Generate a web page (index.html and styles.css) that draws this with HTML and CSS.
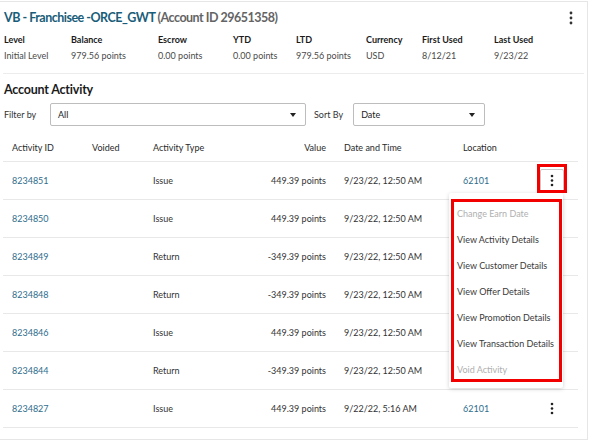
FILE: index.html
```html
<!DOCTYPE html>
<html>
<head>
<meta charset="utf-8">
<link rel="stylesheet" href="styles.css">
</head>
<body>
<div class="card">
  <div class="header">
    <h1 class="title"><span class="name">VB - Franchisee -ORCE_GWT</span> <span class="acct">(Account ID 29651358)</span></h1>
    <span class="kebab top"><svg width="4" height="14" viewBox="0 0 4 14"><circle cx="2" cy="2" r="1.4"/><circle cx="2" cy="7" r="1.4"/><circle cx="2" cy="12" r="1.4"/></svg></span>
  </div>
  <div class="summary">
    <div class="lbl">Level</div><div class="lbl">Balance</div><div class="lbl">Escrow</div><div class="lbl">YTD</div><div class="lbl">LTD</div><div class="lbl">Currency</div><div class="lbl">First Used</div><div class="lbl">Last Used</div>
    <div class="val">Initial Level</div><div class="val">979.56 points</div><div class="val">0.00 points</div><div class="val">0.00 points</div><div class="val">979.56 points</div><div class="val">USD</div><div class="val">8/12/21</div><div class="val">9/23/22</div>
  </div>
  <div class="divider"></div>
  <h2 class="section">Account Activity</h2>
  <div class="filters">
    <span class="flabel">Filter by</span>
    <div class="select wide"><span>All</span><span class="caret"></span></div>
    <span class="flabel sort">Sort By</span>
    <div class="select narrow"><span>Date</span><span class="caret"></span></div>
  </div>
  <div class="table">
    <div class="row head">
      <div class="c id">Activity ID</div><div class="c">Voided</div><div class="c">Activity Type</div><div class="c num">Value</div><div class="c">Date and Time</div><div class="c">Location</div><div class="c act"></div>
    </div>
    <div class="row">
      <div class="c id link">8234851</div><div class="c"></div><div class="c">Issue</div><div class="c num">449.39 points</div><div class="c">9/23/22, 12:50 AM</div><div class="c link">62101</div><div class="c act"><span class="kbtn boxed"><svg width="4" height="13" viewBox="0 0 4 13"><circle cx="2" cy="2" r="1.3"/><circle cx="2" cy="6.5" r="1.3"/><circle cx="2" cy="11" r="1.3"/></svg></span></div>
    </div>
    <div class="row">
      <div class="c id link">8234850</div><div class="c"></div><div class="c">Issue</div><div class="c num">449.39 points</div><div class="c">9/23/22, 12:50 AM</div><div class="c link">62101</div><div class="c act"></div>
    </div>
    <div class="row">
      <div class="c id link">8234849</div><div class="c"></div><div class="c">Return</div><div class="c num">-349.39 points</div><div class="c">9/23/22, 12:50 AM</div><div class="c link">62101</div><div class="c act"></div>
    </div>
    <div class="row">
      <div class="c id link">8234848</div><div class="c"></div><div class="c">Return</div><div class="c num">-349.39 points</div><div class="c">9/23/22, 12:50 AM</div><div class="c link">62101</div><div class="c act"></div>
    </div>
    <div class="row">
      <div class="c id link">8234846</div><div class="c"></div><div class="c">Issue</div><div class="c num">449.39 points</div><div class="c">9/23/22, 12:50 AM</div><div class="c link">62101</div><div class="c act"></div>
    </div>
    <div class="row">
      <div class="c id link">8234844</div><div class="c"></div><div class="c">Return</div><div class="c num">-349.39 points</div><div class="c">9/23/22, 12:50 AM</div><div class="c link">62101</div><div class="c act"></div>
    </div>
    <div class="row">
      <div class="c id link">8234827</div><div class="c"></div><div class="c">Issue</div><div class="c num">449.39 points</div><div class="c">9/22/22, 5:16 AM</div><div class="c link">62101</div><div class="c act"><span class="kbtn"><svg width="4" height="13" viewBox="0 0 4 13"><circle cx="2" cy="2" r="1.3"/><circle cx="2" cy="6.5" r="1.3"/><circle cx="2" cy="11" r="1.3"/></svg></span></div>
    </div>
  </div>
</div>

<div class="menu">
  <div class="item disabled">Change Earn Date</div>
  <div class="item">View Activity Details</div>
  <div class="item">View Customer Details</div>
  <div class="item">View Offer Details</div>
  <div class="item">View Promotion Details</div>
  <div class="item">View Transaction Details</div>
  <div class="item disabled">Void Activity</div>
</div>
<div class="mark mark-kebab"></div>
<div class="mark mark-menu"></div>
</body>
</html>
```

FILE: styles.css
```css
* { box-sizing: border-box; }
html, body { margin: 0; padding: 0; background: #fff; }
body {
  font-family: Lato, "Noto Sans", sans-serif;
  font-size: 9px;
  color: #333;
  position: relative;
  width: 593px;
  height: 445px;
  overflow: hidden;
}
.card {
  margin-top: 1px;
  width: 588px;
  border-top: 1px solid #e6e6e6;
  border-right: 1px solid #e6e6e6;
  border-bottom: 1px solid #e6e6e6;
  padding: 0 3px 11px 4px;
}
.header {
  height: 31px;
  padding-top: 1px;
  display: flex;
  align-items: center;
  justify-content: space-between;
}
.title {
  margin: 0;
  font-size: 12.5px;
  font-weight: 700;
  letter-spacing: -0.5px;
  line-height: 16px;
}
.title .name { color: #195d79; }
.title .acct { color: #646464; }
.kebab.top { display: flex; margin-right: 11px; }
.kebab svg { fill: #333; }
.summary {
  display: grid;
  grid-template-columns: 67px 87px 75px 63px 70px 56px 72px 1fr;
  grid-template-rows: 14px 16px;
  line-height: 14px;
  margin-top: 0;
}
.lbl { font-weight: 700; color: #1b1b1b; }
.val { color: #4a4a4a; align-self: end; }
.divider {
  height: 1px;
  background: #ececec;
  margin: 10px 0 0 -1px;
}
.section {
  margin: 7px 0 0 0;
  font-size: 12.5px;
  font-weight: 700;
  letter-spacing: -0.2px;
  line-height: 18px;
  color: #1b1b1b;
}
.filters {
  margin-top: 4px;
  display: flex;
  align-items: center;
  height: 23px;
}
.flabel { color: #333; width: 46px; }
.flabel.sort { width: auto; margin: 0 10px 0 8px; }
.select {
  height: 23px;
  border: 1px solid #bdbdbd;
  border-radius: 2px;
  display: flex;
  align-items: center;
  justify-content: space-between;
  padding: 0 9px 0 7px;
  color: #222;
}
.select.wide { width: 256px; }
.select.narrow { width: 132px; }
.caret {
  width: 0; height: 0;
  border-left: 3.5px solid transparent;
  border-right: 3.5px solid transparent;
  border-top: 4px solid #222;
}
.table {
  margin: 8px 6px 0 -1px;
}
.row {
  display: grid;
  grid-template-columns: 81px 61px 89px 102px 119px 75px 1fr;
  height: 38px;
  border-bottom: 1px solid #e8e8e8;
  align-items: center;
}
.row.head { height: 28px; color: #2a2a2a; }
.c { padding: 0 8px; white-space: nowrap; }
.c.id { padding-left: 9px; }
.c.num { text-align: right; padding-right: 10px; padding-left: 0; }
.link { color: #2e6d8c; }
.c.act { display: flex; justify-content: flex-end; padding-right: 14px; }
.kbtn {
  width: 24px;
  height: 23px;
  display: flex;
  align-items: center;
  justify-content: center;
  border: 1px solid transparent;
  border-radius: 2px;
}
.kbtn.boxed { border-color: #c8c8c8; background: #fff; }
.kbtn svg { fill: #222; }
.menu {
  position: absolute;
  left: 449px;
  top: 193px;
  width: 114px;
  height: 195px;
  background: #fff;
  border-radius: 2px;
  box-shadow: 0 1px 4px rgba(0,0,0,0.18);
  padding-top: 8px;
}
.item {
  height: 26px;
  line-height: 26px;
  padding-left: 8px;
  color: #3a3a3a;
  white-space: nowrap;
}
.item.disabled { color: #b0b0b0; }
.mark {
  position: absolute;
  border: 3px solid #f20000;
  pointer-events: none;
}
.mark-kebab { left: 537px; top: 164px; width: 30px; height: 29px; }
.mark-menu { left: 451px; top: 199px; width: 111px; height: 183px; }
```
